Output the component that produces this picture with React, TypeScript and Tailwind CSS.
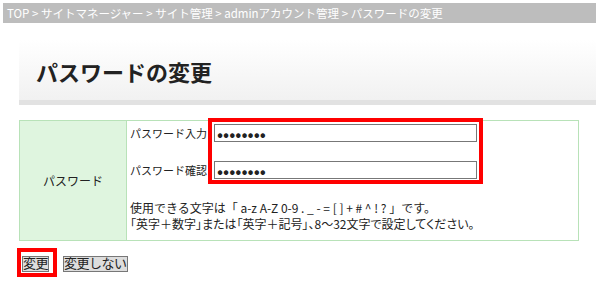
import React from 'react';

const font = "font-['MS_Gothic','Noto_Sans_CJK_JP',sans-serif]";

const PasswordRow = ({ label }: { label: string }) => (
  <div className="flex h-[18px] items-center">
    <span className="w-[84px] shrink-0 whitespace-nowrap text-[11px]">{label}</span>
    <input
      type="password"
      defaultValue="password"
      readOnly
      className="h-[18px] w-[263px] border border-[#777] bg-white px-[2px] text-[18px] leading-[16px] text-[#222] outline-none"
    />
  </div>
);

const btn =
  "h-[16px] border border-[#777] bg-[#ddd] px-0 text-[13px] leading-[14px] tracking-[-0.5px] text-[#222] font-['Liberation_Sans','Noto_Sans_CJK_JP',sans-serif]";

const App = () => {
  return (
    <div className={`relative h-[296px] w-[599px] bg-white text-[12px] text-[#222] ${font}`}>
      <div className="mx-[3px] pt-[3px]">
        <div className="h-[20px] bg-[#bdbdbd] px-[4px] text-[11.5px] leading-[20px] text-white">
          TOP &gt; サイトマネージャー &gt; サイト管理 &gt; adminアカウント管理 &gt; パスワードの変更
        </div>
      </div>

      <div className="ml-[19px] mr-[3px] mt-[17px] border-b-[5px] border-[#e2e2e2] bg-gradient-to-b from-white to-[#f1f1f1]">
        <h1 className="h-[60px] pl-[17px] pt-[18px] text-[22px] font-bold leading-[26px] text-[#222] font-['Noto_Sans_CJK_JP',sans-serif]">
          パスワードの変更
        </h1>
      </div>

      <table className="ml-[19px] mt-[15px] w-[560px] border-collapse">
        <tbody>
          <tr>
            <th className="w-[107px] border border-[#b8e2b8] bg-[#dff5df] text-center font-normal">
              パスワード
            </th>
            <td className="border border-[#b8e2b8] pl-[3px] pt-[3px] pb-[8px]">
              <div className="flex flex-col gap-[19px]">
                <PasswordRow label="パスワード入力" />
                <PasswordRow label="パスワード確認" />
              </div>
              <div className="mt-[21px] leading-[16px]">
                <p>使用できる文字は「 a-z A-Z 0-9 . _ - = [ ] { } + # ^ ! ? 」です。</p>
                <p className="[font-feature-settings:'palt']">「英字＋数字」または「英字＋記号」、8～32文字で設定してください。</p>
              </div>
            </td>
          </tr>
        </tbody>
      </table>

      <div className="ml-[22px] mt-[15px] flex gap-[14px]">
        <button className={btn}>変更</button>
        <button className={btn}>変更しない</button>
      </div>

      {/* red highlight annotations */}
      <div className="pointer-events-none absolute left-[208px] top-[118px] h-[66px] w-[275px] border-[4px] border-[#ff0000]" />
      <div className="pointer-events-none absolute left-[17px] top-[248px] h-[29px] w-[40px] border-[4px] border-[#ff0000]" />
    </div>
  );
};

export default App;
